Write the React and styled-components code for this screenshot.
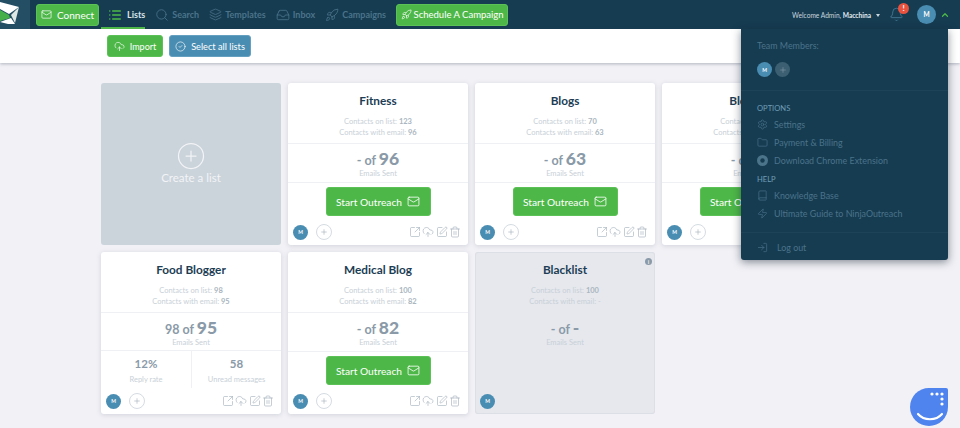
import styled, { createGlobalStyle } from 'styled-components';
import {
  Mail,
  List,
  Search,
  Layers,
  Inbox,
  Rocket,
  Bell,
  Settings,
  Folder,
  Book,
  Zap,
  LogIn,
  SquareArrowOutUpRight,
  CloudUpload,
  SquarePen,
  Trash2,
  Plus,
  CirclePlus,
  CircleCheck,
  ChevronUp,
} from 'lucide-react';

const colors = {
  navy: '#163c52',
  green: '#4db848',
  blue: '#4a8db2',
  dim: '#4b7389',
  page: '#f1f1f6',
  title: '#1c3d54',
  faint: '#c8d0d7',
  stat: '#8a9aa8',
};

const GlobalStyle = createGlobalStyle`
  html, body {
    margin: 0;
    height: 100%;
    overflow: hidden;
    background: ${colors.page};
    font-family: Lato, "Open Sans", sans-serif;
  }
  * { box-sizing: border-box; }
`;

const Page = styled.div`
  position: relative;
  width: 960px;
  height: 428px;
  overflow: hidden;
`;

const Nav = styled.header`
  display: flex;
  align-items: center;
  height: 29px;
  background: ${colors.navy};
  color: ${colors.dim};
`;

const LogoBox = styled.div`
  width: 30px;
  height: 29px;
  background: #234e64;
  flex: none;
  overflow: hidden;
`;

const GreenButton = styled.button`
  display: inline-flex;
  align-items: center;
  justify-content: center;
  gap: ${(p) => p.$gap || 5}px;
  height: ${(p) => p.$h || 22}px;
  width: ${(p) => p.$w}px;
  padding: 0;
  border: 1px solid #5cc257;
  border-radius: 3px;
  background: ${colors.green};
  color: #fff;
  font: 400 ${(p) => p.$size || 10}px Lato, sans-serif;
  white-space: nowrap;
`;

const ScheduleButton = styled(GreenButton)`
  margin-left: 5px;
`;

const ConnectWrap = styled.div`
  margin: 0 2px 0 6px;
`;

const NavItem = styled.a`
  display: flex;
  align-items: center;
  gap: ${(p) => p.$gap || 3}px;
  height: 29px;
  margin-right: ${(p) => (p.$active ? 5 : 0)}px;
  padding: 0 ${(p) => (p.$active ? 0 : 5)}px 0 ${(p) => (p.$active ? 7 : 5)}px;
  font-size: 9px;
  font-weight: 700;
  color: ${(p) => (p.$active ? '#d9e3e8' : colors.dim)};
  border-bottom: 2px solid ${(p) => (p.$active ? colors.green : 'transparent')};
  border-top: 2px solid transparent;
`;

const ListIcon = styled(List)`
  color: ${colors.green};
`;

const NavRight = styled.div`
  display: flex;
  align-items: center;
  margin-left: auto;
  padding-right: 10px;
`;

const Welcome = styled.span`
  font-size: 6.6px;
  color: #c9d6dd;
  white-space: nowrap;

  b {
    font-weight: 700;
    color: #e4ecf0;
  }
`;

const Caret = styled.i`
  display: inline-block;
  margin: 0 0 1px 5px;
  border: 2.5px solid transparent;
  border-top: 3px solid #c9d6dd;
  border-bottom: 0;
`;

const BellWrap = styled.div`
  position: relative;
  display: flex;
  margin: 0 13px 0 9px;
  color: #4a7d98;
`;

const Badge = styled.span`
  position: absolute;
  top: -4px;
  right: -5px;
  width: 11px;
  height: 11px;
  border-radius: 50%;
  background: #e8523f;
  color: #fff;
  font-size: 8px;
  font-weight: 700;
  line-height: 11px;
  text-align: center;
`;

const Avatar = styled.span`
  display: inline-flex;
  align-items: center;
  justify-content: center;
  flex: none;
  width: ${(p) => p.$size || 15}px;
  height: ${(p) => p.$size || 15}px;
  border-radius: 50%;
  background: ${colors.blue};
  color: #fff;
  font-size: ${(p) => (p.$size > 16 ? 6.5 : 5)}px;
  font-weight: 700;
`;

const UpChevron = styled(ChevronUp)`
  margin-left: 4px;
  color: ${colors.green};
`;

const SubBar = styled.div`
  display: flex;
  gap: 6px;
  height: 34px;
  padding: 6px 0 0 107px;
  background: #fff;
  box-shadow: 0 1px 3px rgba(60, 70, 90, 0.35);
`;

const BlueButton = styled(GreenButton)`
  background: ${colors.blue};
  border-color: #65a0c0;
`;

const Grid = styled.main`
  display: grid;
  grid-template-columns: repeat(4, 180px);
  grid-auto-rows: 162px;
  gap: 7px;
  padding: 20px 0 0 101px;
`;

const CreateCard = styled.div`
  display: flex;
  flex-direction: column;
  align-items: center;
  padding-top: 58px;
  border-radius: 3px;
  background: #cbd3db;
  color: #f2f4f6;
  font-size: 11.5px;
`;

const Card = styled.article`
  position: relative;
  display: flex;
  flex-direction: column;
  border-radius: 3px;
  background: ${(p) => (p.$muted ? '#e6e8ee' : '#fff')};
  box-shadow: ${(p) =>
    p.$muted ? 'inset 0 0 0 1px #dcdfe5' : '0 1px 5px rgba(70, 80, 100, 0.18)'};
`;

const CardHead = styled.div`
  height: 61px;
  padding-top: 10px;
  text-align: center;
  border-bottom: 1px solid ${(p) => (p.$muted ? 'transparent' : '#eef0f3')};
`;

const Title = styled.h3`
  margin: 0 0 7px;
  font-size: 11.8px;
  line-height: 16px;
  font-weight: 700;
  color: ${colors.title};
`;

const Meta = styled.div`
  font-size: 7.5px;
  line-height: 11px;
  color: ${colors.faint};

  b {
    color: #aab6c0;
    font-weight: 700;
  }
`;

const Sent = styled.div`
  height: 39px;
  padding-top: 5px;
  text-align: center;
  border-bottom: 1px solid ${(p) => (p.$muted ? 'transparent' : '#eef0f3')};
`;

const SentValue = styled.div`
  font-size: 12.5px;
  line-height: 19px;
  font-weight: 700;
  color: ${colors.stat};

  b {
    font-size: 17.5px;
  }
`;

const SentLabel = styled.div`
  font-size: 7.5px;
  line-height: 9px;
  margin-top: -1px;
  color: ${colors.faint};
`;

const ActionRow = styled.div`
  display: flex;
  justify-content: center;
  padding-top: 4px;
`;

const Stats = styled.div`
  display: grid;
  grid-template-columns: 1fr 1fr;
  height: 37px;
`;

const Stat = styled.div`
  padding-top: 6px;
  text-align: center;
  font-size: 7.5px;
  line-height: 12px;
  color: ${colors.faint};

  & + & {
    border-left: 1px solid #eef0f3;
  }

  b {
    display: block;
    margin-bottom: 3px;
    font-size: 11.5px;
    line-height: 14px;
    color: ${colors.stat};
  }
`;

const CardFoot = styled.div`
  display: flex;
  align-items: center;
  gap: 8px;
  margin-top: auto;
  height: 26px;
  padding: 0 7px 0 5px;
`;

const AddMember = styled.span`
  display: inline-flex;
  align-items: center;
  justify-content: center;
  width: 16px;
  height: 16px;
  border-radius: 50%;
  border: 1px solid #d5dce2;
  color: #a9b5bf;
`;

const Tools = styled.div`
  display: flex;
  gap: 1.5px;
  margin-left: auto;
  color: #9fadb8;
`;

const InfoDot = styled.span`
  position: absolute;
  top: 6px;
  right: 3px;
  width: 7px;
  height: 7px;
  border-radius: 50%;
  background: #8a9aa8;
  color: #e6e8ee;
  font-size: 6px;
  font-weight: 700;
  line-height: 7px;
  text-align: center;
`;

const Menu = styled.aside`
  position: absolute;
  top: 29px;
  left: 741px;
  width: 207px;
  height: 231px;
  border-radius: 0 0 3px 3px;
  background: ${colors.navy};
  box-shadow: 0 2px 8px rgba(20, 30, 45, 0.5);
  color: ${colors.dim};
  font-size: 8.9px;
`;

const MenuTeam = styled.div`
  height: 62px;
  padding: 11px 16px 0;
  border-bottom: 1px solid #1c4358;
`;

const TeamLabel = styled.div`
  margin-bottom: 10px;
  line-height: 12px;
`;

const TeamRow = styled.div`
  display: flex;
  gap: 3px;
`;

const TeamAdd = styled.span`
  display: inline-flex;
  align-items: center;
  justify-content: center;
  width: 15px;
  height: 15px;
  border-radius: 50%;
  background: #3d5f72;
  color: #7d98a7;
`;

const MenuBody = styled.div`
  height: 142px;
  padding: 12px 16px 0;
  border-bottom: 1px solid #1c4358;
`;

const SectionLabel = styled.div`
  margin-bottom: 1px;
  font-size: 7.6px;
  line-height: 11px;
  color: #6f9cb5;
`;

const MenuItem = styled.div`
  display: flex;
  align-items: center;
  gap: 6px;
  height: 18px;
  margin-bottom: ${(p) => p.$mb || 0}px;
`;

const ChromeMark = styled.svg`
  flex: none;
`;

const MenuFoot = styled.div`
  display: flex;
  align-items: center;
  gap: 9px;
  padding: 5px 16px 0;
  height: 24px;
`;

const Widget = styled.div`
  position: absolute;
  left: 910px;
  top: 388px;
  width: 38px;
  height: 38px;
  border-radius: 50% 2px 50% 50%;
  background: #4f83ee;
`;

const Logo = () => (
  <svg width="30" height="29" viewBox="0 0 30 29">
    <path d="M0 2 L19 7 L9 14 L0 9 Z" fill="#fff" />
    <path d="M0 10 L9 15 L10 18 L0 21 Z" fill="#45b04a" />
    <path d="M0 22 L11 18 L15 24 L8 24 Z" fill="#fff" />
    <path d="M19 7 L11 15 L15 23 Z" fill="#dfe8e4" />
  </svg>
);

const ChromeIcon = () => (
  <ChromeMark width="11" height="11" viewBox="0 0 10 10">
    <circle cx="5" cy="5" r="5" fill={colors.dim} />
    <circle cx="5" cy="5" r="2" fill={colors.navy} />
  </ChromeMark>
);

const Footer = ({ muted }) => (
  <CardFoot>
    <Avatar>M</Avatar>
    {!muted && (
      <>
        <AddMember>
          <Plus size={8} />
        </AddMember>
        <Tools>
          <SquareArrowOutUpRight size={12} strokeWidth={1.2} />
          <CloudUpload size={12} strokeWidth={1.2} />
          <SquarePen size={12} strokeWidth={1.2} />
          <Trash2 size={12} strokeWidth={1.2} />
        </Tools>
      </>
    )}
  </CardFoot>
);

const ListCard = ({ title, contacts, emails, sent = '-', children }) => (
  <Card>
    <CardHead>
      <Title>{title}</Title>
      <Meta>
        Contacts on list: <b>{contacts}</b>
      </Meta>
      <Meta>
        Contacts with email: <b>{emails}</b>
      </Meta>
    </CardHead>
    <Sent>
      <SentValue>
        {sent} of <b>{emails}</b>
      </SentValue>
      <SentLabel>Emails Sent</SentLabel>
    </Sent>
    {children || (
      <ActionRow>
        <GreenButton $w={105} $h={29} $size={10.2}>
          Start Outreach <Mail size={13} strokeWidth={1.5} />
        </GreenButton>
      </ActionRow>
    )}
    <Footer />
  </Card>
);

const App = () => (
  <Page>
    <GlobalStyle />
    <Nav>
      <LogoBox>
        <Logo />
      </LogoBox>
      <ConnectWrap>
        <GreenButton $w={63}>
          <Mail size={11} strokeWidth={1.5} /> Connect
        </GreenButton>
      </ConnectWrap>
      <NavItem $active $gap={5}>
        <ListIcon size={14} strokeWidth={2.5} /> Lists
      </NavItem>
      <NavItem>
        <Search size={14} strokeWidth={1.4} /> Search
      </NavItem>
      <NavItem>
        <Layers size={13} strokeWidth={1.4} /> Templates
      </NavItem>
      <NavItem>
        <Inbox size={14} strokeWidth={1.4} /> Inbox
      </NavItem>
      <NavItem>
        <Rocket size={14} strokeWidth={1.4} /> Campaigns
      </NavItem>
      <ScheduleButton $w={112} $gap={2} $size={9.5}>
        <Rocket size={11} strokeWidth={1.4} /> Schedule A Campaign
      </ScheduleButton>
      <NavRight>
        <Welcome>
          Welcome Admin, <b>Macchina</b>
          <Caret />
        </Welcome>
        <BellWrap>
          <Bell size={15} strokeWidth={1.3} />
          <Badge>!</Badge>
        </BellWrap>
        <Avatar $size={19}>M</Avatar>
        <UpChevron size={10} strokeWidth={3} />
      </NavRight>
    </Nav>
    <SubBar>
      <GreenButton $w={56} $size={9}>
        <CloudUpload size={11} strokeWidth={1.4} /> Import
      </GreenButton>
      <BlueButton $w={82} $size={9.2}>
        <CircleCheck size={11} strokeWidth={1.4} /> Select all lists
      </BlueButton>
    </SubBar>
    <Grid>
      <CreateCard>
        <CirclePlus size={30} strokeWidth={1} />
        Create a list
      </CreateCard>
      <ListCard title="Fitness" contacts="123" emails="96" />
      <ListCard title="Blogs" contacts="70" emails="63" />
      <ListCard title="Bloggers" contacts="64" emails="51" />
      <ListCard title="Food Blogger" contacts="98" emails="95" sent="98">
        <Stats>
          <Stat>
            <b>12%</b>
            Reply rate
          </Stat>
          <Stat>
            <b>58</b>
            Unread messages
          </Stat>
        </Stats>
      </ListCard>
      <ListCard title="Medical Blog" contacts="100" emails="82" />
      <Card $muted>
        <InfoDot>i</InfoDot>
        <CardHead $muted>
          <Title>Blacklist</Title>
          <Meta>
            Contacts on list: <b>100</b>
          </Meta>
          <Meta>Contacts with email: -</Meta>
        </CardHead>
        <Sent $muted>
          <SentValue>
            - of <b>-</b>
          </SentValue>
          <SentLabel>Emails Sent</SentLabel>
        </Sent>
        <Footer muted />
      </Card>
    </Grid>
    <Menu>
      <MenuTeam>
        <TeamLabel>Team Members:</TeamLabel>
        <TeamRow>
          <Avatar>M</Avatar>
          <TeamAdd>
            <Plus size={8} />
          </TeamAdd>
        </TeamRow>
      </MenuTeam>
      <MenuBody>
        <SectionLabel>OPTIONS</SectionLabel>
        <MenuItem>
          <Settings size={11} strokeWidth={1.4} /> Settings
        </MenuItem>
        <MenuItem>
          <Folder size={11} strokeWidth={1.4} /> Payment &amp; Billing
        </MenuItem>
        <MenuItem $mb={5}>
          <ChromeIcon /> Download Chrome Extension
        </MenuItem>
        <SectionLabel>HELP</SectionLabel>
        <MenuItem>
          <Book size={11} strokeWidth={1.4} /> Knowledge Base
        </MenuItem>
        <MenuItem>
          <Zap size={11} strokeWidth={1.4} /> Ultimate Guide to NinjaOutreach
        </MenuItem>
      </MenuBody>
      <MenuFoot>
        <LogIn size={11} strokeWidth={1.4} /> Log out
      </MenuFoot>
    </Menu>
    <Widget>
      <svg width="38" height="38" viewBox="0 0 38 38">
        <g fill="#fff">
          <circle cx="22" cy="6" r="1.6" />
          <circle cx="27" cy="6" r="1.6" />
          <circle cx="32" cy="6" r="1.6" />
          <circle cx="32" cy="11" r="1.6" />
          <circle cx="32" cy="16" r="1.6" />
        </g>
        <path d="M8 26 C14 33 26 33 32 26" fill="none" stroke="#fff" strokeWidth="2.2" strokeLinecap="round" />
      </svg>
    </Widget>
  </Page>
);

export default App;
